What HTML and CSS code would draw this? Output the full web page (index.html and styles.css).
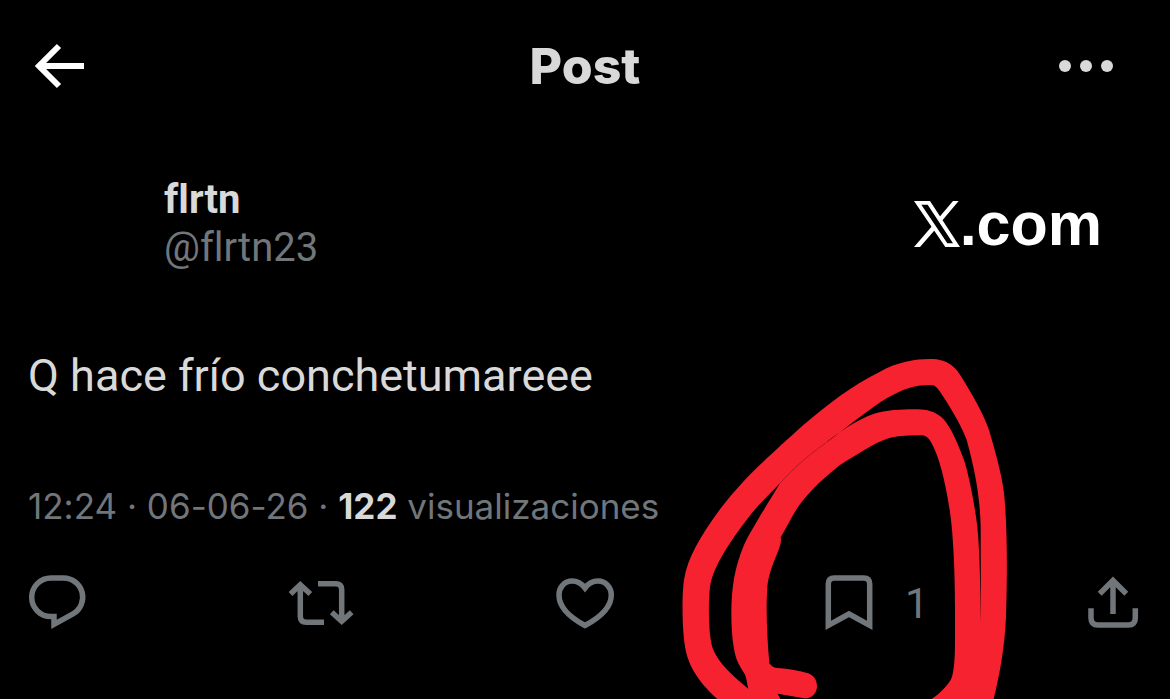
FILE: index.html
```html
<!DOCTYPE html>
<html lang="es">
<head>
    <meta charset="UTF-8">
    <meta name="viewport" content="width=device-width, initial-scale=1.0">
    <title>Post</title>
    <link rel="stylesheet" href="styles.css">
</head>
<body>
    <header class="topbar">
        <button class="icon-button" aria-label="Volver">
            <svg class="icon back" viewBox="0 0 64 64"><path d="M84 66H40M59 46L39 66L59 86" transform="translate(-28 -34)"/></svg>
        </button>
        <h1 class="title">Post</h1>
        <button class="icon-button" aria-label="Más opciones">
            <svg class="icon dots" viewBox="0 0 64 64"><circle cx="-13" cy="32" r="6"/><circle cx="8" cy="32" r="6"/><circle cx="29" cy="32" r="6"/></svg>
        </button>
    </header>

    <main class="post">
        <div class="author">
            <div class="names">
                <strong class="name">flrtn</strong>
                <a class="handle" href="#">@flrtn23</a>
            </div>
            <a class="brand" href="#" aria-label="X.com">
                <svg class="brand-mark" viewBox="0 0 138 138"><path fill-rule="evenodd" d="M0 0H48L138 138H94ZM22 11L100 127H117L41 11Z"/><path d="M117 0H134L84 59L77 47ZM0 138H18L67 82L59 70Z"/></svg>
                <span>.com</span>
            </a>
        </div>

        <p class="text">Q hace frío conchetumareee</p>

        <p class="meta">12:24 · 06-06-26 · <strong>122</strong> visualizaciones</p>

        <div class="actions">
            <button class="action" aria-label="Responder">
                <svg class="icon" viewBox="0 0 64 64"><path d="M29 45.6H26A19.3 19.3 0 0 1 26 7H38.5A19.2 19.2 0 0 1 48 42.9L29 53.4Z"/></svg>
            </button>
            <button class="action" aria-label="Repostear">
                <svg class="icon" viewBox="0 0 64 64"><path d="M1.5 23L11.3 13.8L21.3 23M11.3 14V45.3Q11.3 51.3 17.3 51.3H35M29 12.7H46.7Q52.7 12.7 52.7 18.7V50M42.7 41.3L52.7 50.2L62.7 41.3"/></svg>
            </button>
            <button class="action" aria-label="Me gusta">
                <svg class="icon" viewBox="0 0 64 64"><path d="M32 17C27.5 11 23.5 10 19 10C11.5 10 6 16.5 6 24C6 36 16 46 32 54.5C48 46 58.3 36 58.3 24C58.3 16.5 52.5 10 45 10C40.5 10 36.5 11 32 17Z"/></svg>
            </button>
            <div class="bookmark">
                <button class="action" aria-label="Guardar, 1">
                    <svg class="icon" viewBox="0 0 64 64"><path d="M17.3 7H46.7Q52.7 7 52.7 13V54.4L32 43L11.3 54.4V13Q11.3 7 17.3 7Z"/></svg>
                    <span class="count">1</span>
                </button>
                <!-- red marker circle drawn over the bookmark -->
                <svg class="scribble" viewBox="0 0 1050 1077" aria-hidden="true">
                    <path class="ink" fill-rule="evenodd" d="M142 1077C80 1020 50 970 43 905C36 850 36 760 42 720C52 655 90 590 150 508C220 415 290 355 400 255C470 195 540 140 630 95C690 62 750 55 800 58C845 65 862 90 880 120C910 170 940 220 957 270C980 350 1000 420 1004 480C1012 580 1012 700 1008 830C1004 920 990 1000 971 1077H785C810 1060 840 1030 846 1010C853 985 855 950 855 900V800C855 700 850 600 843 540C835 470 815 370 790 320C780 298 770 287 757 286C720 286 690 286 655 295C610 310 560 345 510 375C440 430 400 475 375 515C360 540 345 570 332 592C335 605 330 620 322 640C305 680 295 710 292 740C288 800 290 880 298 970C305 980 312 983 320 984C355 986 390 993 415 1000C435 1008 441 1025 441 1040C440 1062 422 1077 402 1075L323 1061L331 1077Z
                        M236 1047C190 1010 145 970 128 925C113 880 115 760 122 730C135 670 190 590 245 520C270 490 300 460 330 430C300 480 240 575 222 615C195 680 184 740 184 820C184 880 190 940 205 970C215 990 225 1000 227 1010C232 1025 232 1040 236 1047Z
                        M460 315C540 255 600 205 650 175C700 145 740 133 787 135C800 137 810 155 820 170C850 215 880 270 890 300C915 390 930 470 932 560L933 850C931 760 930 640 922 560C912 480 895 400 882 360C860 300 835 245 810 228C785 210 760 208 735 208C690 208 650 210 610 222C560 240 500 280 460 315Z"/>
                    <path class="seam" d="M325 435C370 385 415 345 465 311"/>
                </svg>
            </div>
            <button class="action" aria-label="Compartir">
                <svg class="icon" viewBox="0 0 64 64"><path d="M18.7 22.8L32 9.5L45.3 22.8M32 10V43M10 37.3V47Q10 54 17 54H47.3Q54.3 54 54.3 47V37.3"/></svg>
            </button>
        </div>
    </main>
</body>
</html>
```
FILE: styles.css
```css
body {
    margin: 0;
    min-height: 100vh;
    background: #000;
    color: #d9d9d9;
    font-family: Roboto, sans-serif;
    font-variant-ligatures: none;
    overflow: hidden;
}

button {
    padding: 0;
    border: none;
    background: none;
    color: inherit;
    font: inherit;
    cursor: pointer;
}

a {
    color: inherit;
    text-decoration: none;
}

.topbar {
    display: flex;
    justify-content: space-between;
    align-items: center;
    height: 132px;
    padding: 0 28px;
}

.icon-button {
    height: 64px;
}

.icon {
    display: block;
    width: 64px;
    height: 64px;
    overflow: visible;
    fill: none;
    stroke: currentColor;
    stroke-width: 5.5;
}

.back {
    color: #fff;
    stroke-width: 6;
}

.dots {
    fill: currentColor;
    stroke: none;
}

.title {
    margin: 0;
    font-family: Inter, sans-serif;
    font-size: 50px;
    font-weight: 800;
}

.author {
    display: flex;
    justify-content: space-between;
    padding: 44px 68px 0 164px;
}

.names {
    display: flex;
    flex-direction: column;
    font-size: 40px;
    line-height: 48px;
}

.handle {
    color: #71767b;
}

.brand {
    display: flex;
    align-items: center;
    color: #fff;
    font-family: 'Liberation Sans', sans-serif;
    font-size: 61px;
    font-weight: bold;
    line-height: 96px;
}

.brand-mark {
    width: 46px;
    height: 46px;
    fill: currentColor;
}

.text {
    margin: 72px 28px 0;
    font-size: 45px;
    line-height: 64px;
}

.meta {
    margin: 72px 28px 0;
    color: #71767b;
    font-family: Inter, sans-serif;
    font-size: 35px;
    line-height: 52px;
}

.meta strong {
    color: #d9d9d9;
}

.actions {
    display: flex;
    justify-content: space-between;
    padding: 39px 25px 0;
    color: #71767b;
}

.action {
    display: flex;
    align-items: center;
    width: 64px;
    height: 64px;
}

.action .icon {
    flex: none;
}

.bookmark {
    position: relative;
}

.count {
    margin-left: 24px;
    font-size: 42px;
}

.scribble {
    position: absolute;
    top: -231px;
    left: -147px;
    width: 350px;
    height: 359px;
    pointer-events: none;
}

.ink {
    fill: #f6222f;
}

.seam {
    fill: none;
    stroke: #98141d;
    stroke-width: 2;
}
```
